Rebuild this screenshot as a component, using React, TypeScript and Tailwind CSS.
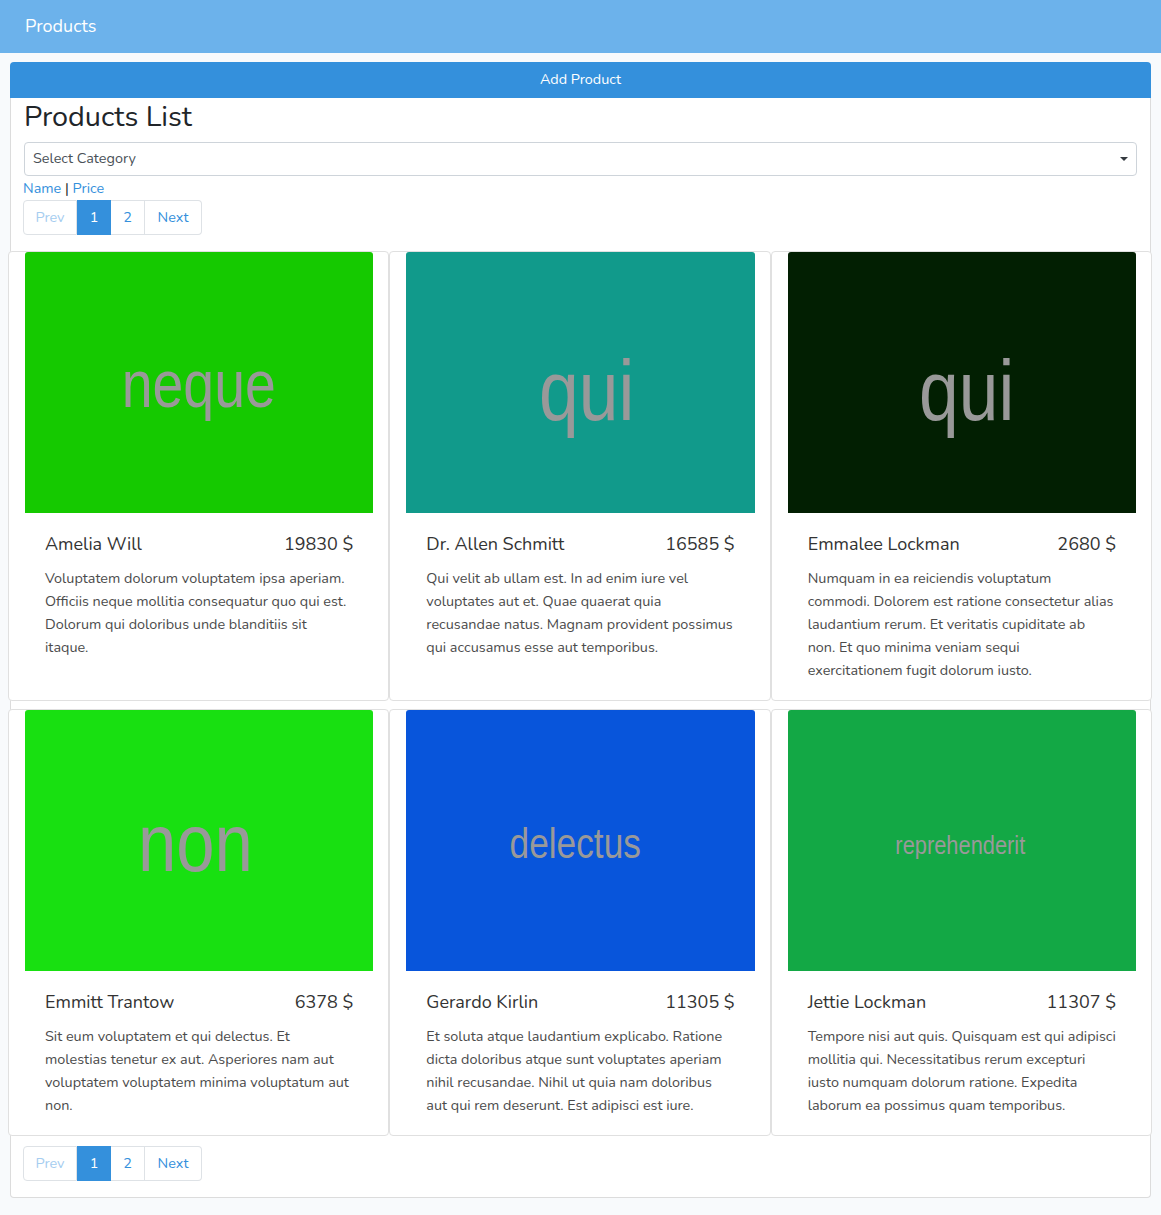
import { clsx } from "clsx";

type Product = {
  name: string;
  price: number;
  description: string;
  word: string;
  bg: string;
  wordClass: string;
};

const products: Product[] = [
  {
    name: "Amelia Will",
    price: 19830,
    description:
      "Voluptatem dolorum voluptatem ipsa aperiam. Officiis neque mollitia consequatur quo qui est. Dolorum qui doloribus unde blanditiis sit itaque.",
    word: "neque",
    bg: "bg-[#15c900]",
    wordClass: "text-[66px] translate-y-[1px]",
  },
  {
    name: "Dr. Allen Schmitt",
    price: 16585,
    description:
      "Qui velit ab ullam est. In ad enim iure vel voluptates aut et. Quae quaerat quia recusandae natus. Magnam provident possimus qui accusamus esse aut temporibus.",
    word: "qui",
    bg: "bg-[#119a8b]",
    wordClass: "text-[85px] translate-y-[8px] translate-x-[6px]",
  },
  {
    name: "Emmalee Lockman",
    price: 2680,
    description:
      "Numquam in ea reiciendis voluptatum commodi. Dolorem est ratione consectetur alias laudantium rerum. Et veritatis cupiditate ab non. Et quo minima veniam sequi exercitationem fugit dolorum iusto.",
    word: "qui",
    bg: "bg-[#021f02]",
    wordClass: "text-[85px] translate-y-[8px] translate-x-[5px]",
  },
  {
    name: "Emmitt Trantow",
    price: 6378,
    description:
      "Sit eum voluptatem et qui delectus. Et molestias tenetur ex aut. Asperiores nam aut voluptatem voluptatem minima voluptatum aut non.",
    word: "non",
    bg: "bg-[#18e011]",
    wordClass: "text-[82px] translate-y-[2px] -translate-x-[4px]",
  },
  {
    name: "Gerardo Kirlin",
    price: 11305,
    description:
      "Et soluta atque laudantium explicabo. Ratione dicta doloribus atque sunt voluptates aperiam nihil recusandae. Nihil ut quia nam doloribus aut qui rem deserunt. Est adipisci est iure.",
    word: "delectus",
    bg: "bg-[#0855db]",
    wordClass: "text-[42px] translate-y-[3px] -translate-x-[5px]",
  },
  {
    name: "Jettie Lockman",
    price: 11307,
    description:
      "Tempore nisi aut quis. Quisquam est qui adipisci mollitia qui. Necessitatibus rerum excepturi iusto numquam dolorum ratione. Expedita laborum ea possimus quam temporibus.",
    word: "reprehenderit",
    bg: "bg-[#13a845]",
    wordClass: "text-[26px] translate-y-[4px] -translate-x-[2px]",
  },
];

const Pagination = () => (
  <div className="flex h-[35px] w-fit text-[14.4px]">
    <span className="flex w-[54px] items-center justify-center rounded-l-[4px] border border-[#dee2e6] text-[#a6cdf0]">
      Prev
    </span>
    <span className="flex w-[34px] items-center justify-center border border-[#3490dc] bg-[#3490dc] text-white">
      1
    </span>
    <span className="flex w-[34px] items-center justify-center border border-l-0 border-[#dee2e6] text-[#3490dc]">
      2
    </span>
    <span className="flex w-[57px] items-center justify-center rounded-r-[4px] border border-l-0 border-[#dee2e6] text-[#3490dc]">
      Next
    </span>
  </div>
);

const ProductCard = ({ product }: { product: Product }) => (
  <div className="flex flex-col rounded-[4px] border border-[#e0e0e0] bg-white">
    <div
      className={clsx(
        "ml-[16px] mr-[15px] flex h-[261px] items-center justify-center overflow-hidden rounded-t-[3px]",
        product.bg,
      )}
    >
      <span
        className={clsx(
          "scale-x-[0.84] leading-none text-[#999999] [font-family:'Liberation_Sans_Narrow','Liberation_Sans',Arial,sans-serif]",
          product.wordClass,
        )}
      >
        {product.word}
      </span>
    </div>
    <div className="ml-[16px] mr-[15px] px-[20px] pb-[18px] pt-[19px]">
      <div className="flex items-center justify-between text-[18px] leading-[24px] text-[#333]">
        <span>{product.name}</span>
        <span>{product.price} $</span>
      </div>
      <p className="mt-[11px] text-[14.4px] leading-[23px] text-[#4b4b4b]">{product.description}</p>
    </div>
  </div>
);

export default function App() {
  return (
    <div className="min-h-[1215px] bg-[#f8fafc] pb-[17px] text-[#212529] [font-family:Nunito,Lato,'Open_Sans',sans-serif]">
      {/* Top bar */}
      <div className="flex h-[53px] items-center bg-[#6cb2eb] px-[25px] text-[18px] text-white">
        Products
      </div>

      <div className="mx-[10px] mt-[9px]">
        <button className="flex h-[36px] w-full items-center justify-center rounded-t-[4px] bg-[#3490dc] text-[14.4px] text-white">
          Add Product
        </button>

        <div className="rounded-b-[4px] border border-t-0 border-[#dcdcdc] bg-white px-[13px] pb-[16px]">
          <h2 className="text-[28.8px] leading-[38px] text-[#212529]">Products List</h2>

          <div className="mt-[6px] flex h-[34px] items-center justify-between rounded-[4px] border border-[#ced4da] pl-[8px] pr-[8px] text-[14.4px] text-[#495057]">
            <span>Select Category</span>
            <span className="h-0 w-0 border-x-[4px] border-t-[4px] border-x-transparent border-t-[#343a40]" />
          </div>

          <div className="mt-[2px] -ml-[1px] text-[14.4px] leading-[20px]">
            <span className="text-[#3490dc]">Name</span>
            <span className="text-[#212529]"> | </span>
            <span className="text-[#3490dc]">Price</span>
          </div>

          <div className="mt-[2px] -ml-[1px]">
            <Pagination />
          </div>

          <div className="-ml-[16px] -mr-[15px] mt-[16px] grid grid-cols-3 gap-y-[8px]">
            {products.map((p) => (
              <ProductCard key={p.name + p.price} product={p} />
            ))}
          </div>

          <div className="mt-[10px] -ml-[1px]">
            <Pagination />
          </div>
        </div>
      </div>
    </div>
  );
}
